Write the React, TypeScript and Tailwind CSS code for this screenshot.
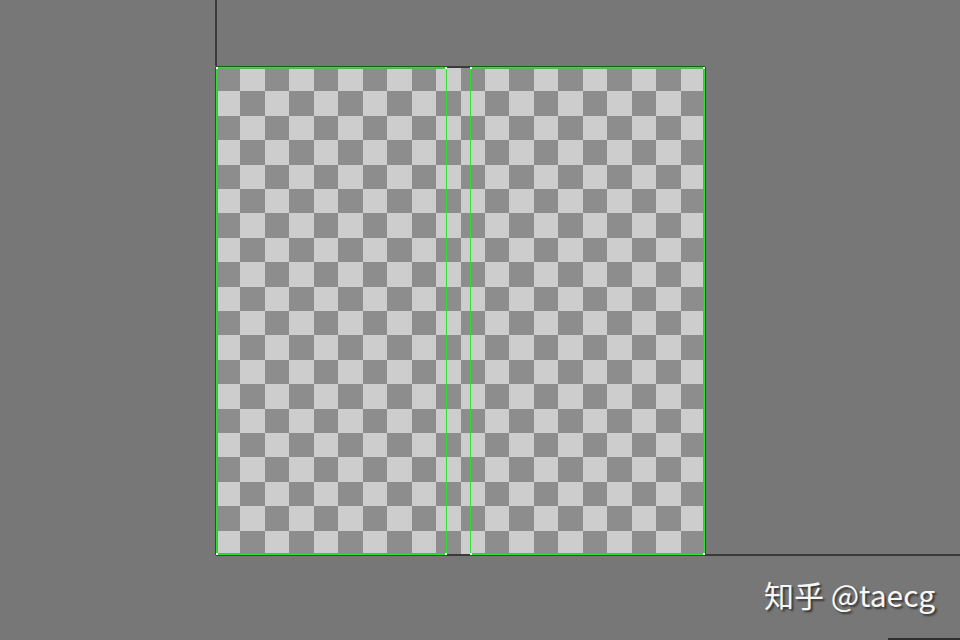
const COLS = 20;
const ROWS = 20;

function Checker() {
  const cells = [];
  for (let r = 0; r < ROWS; r++) {
    for (let c = 0; c < COLS; c++) {
      const dark = (r + c) % 2 === 0;
      cells.push(
        <div key={`${r}-${c}`} className={dark ? "bg-[#8d8d8d]" : "bg-[#cdcdcd]"} />
      );
    }
  }
  return (
    <div className="grid h-full w-full grid-cols-[repeat(20,1fr)] grid-rows-[repeat(20,1fr)]">
      {cells}
    </div>
  );
}

function Vertex({ pos }: { pos: string }) {
  return <div className={`absolute h-[2px] w-[2px] bg-white ${pos}`} />;
}

export default function App() {
  return (
    <div className="relative h-[640px] w-[960px] overflow-hidden bg-[#777777]">
      {/* uv axes */}
      <div className="absolute left-[215px] top-0 h-[66px] w-[2px] bg-[#3a3a3a]" />
      <div className="absolute left-[705px] right-0 top-[554px] h-[2px] bg-[#3a3a3a]" />
      <div className="absolute bottom-0 left-[888px] right-0 h-[2px] bg-[#2e2e2e]" />

      <div className="pl-[216px] pt-[67px]">
        <div className="relative h-[488px] w-[489px]">
          <Checker />
          {/* seam gap edges */}
          <div className="absolute left-[230px] top-[-1px] h-[2px] w-[24px] bg-[#3a3a3a]" />
          <div className="absolute bottom-[-1px] left-[230px] h-[2px] w-[24px] bg-[#3a3a3a]" />
          {/* left shell */}
          <div className="absolute left-0 top-0 h-full w-[231px] border border-[#2fe02f] shadow-[-1px_0_0_#126212,0_-1px_0_#126212,0_1px_0_#126212,inset_1px_1px_0_#4fb84f,inset_0_-1px_0_#4fb84f]">
            <Vertex pos="-left-[1px] -top-[1px]" />
            <Vertex pos="-right-[1px] -top-[1px]" />
            <Vertex pos="-left-[1px] -bottom-[1px]" />
            <Vertex pos="-right-[1px] -bottom-[1px]" />
          </div>
          {/* right shell */}
          <div className="absolute right-0 top-0 h-full w-[235px] border border-[#2fe02f] shadow-[1px_0_0_#126212,0_-1px_0_#126212,0_1px_0_#126212,inset_-1px_1px_0_#4fb84f,inset_0_-1px_0_#4fb84f]">
            <Vertex pos="-left-[1px] -top-[1px]" />
            <Vertex pos="-right-[1px] -top-[1px]" />
            <Vertex pos="-left-[1px] -bottom-[1px]" />
            <Vertex pos="-right-[1px] -bottom-[1px]" />
          </div>
        </div>
      </div>

      <div
        className="absolute left-[764px] top-[579px] whitespace-nowrap text-[30px] leading-[30px] text-[#f7f7f7] [text-shadow:2px_2px_2px_rgba(0,0,0,0.55)]"
        style={{ fontFamily: '"Noto Sans CJK SC", "Noto Sans", sans-serif' }}
      >
        知乎 @taecg
      </div>
    </div>
  );
}
